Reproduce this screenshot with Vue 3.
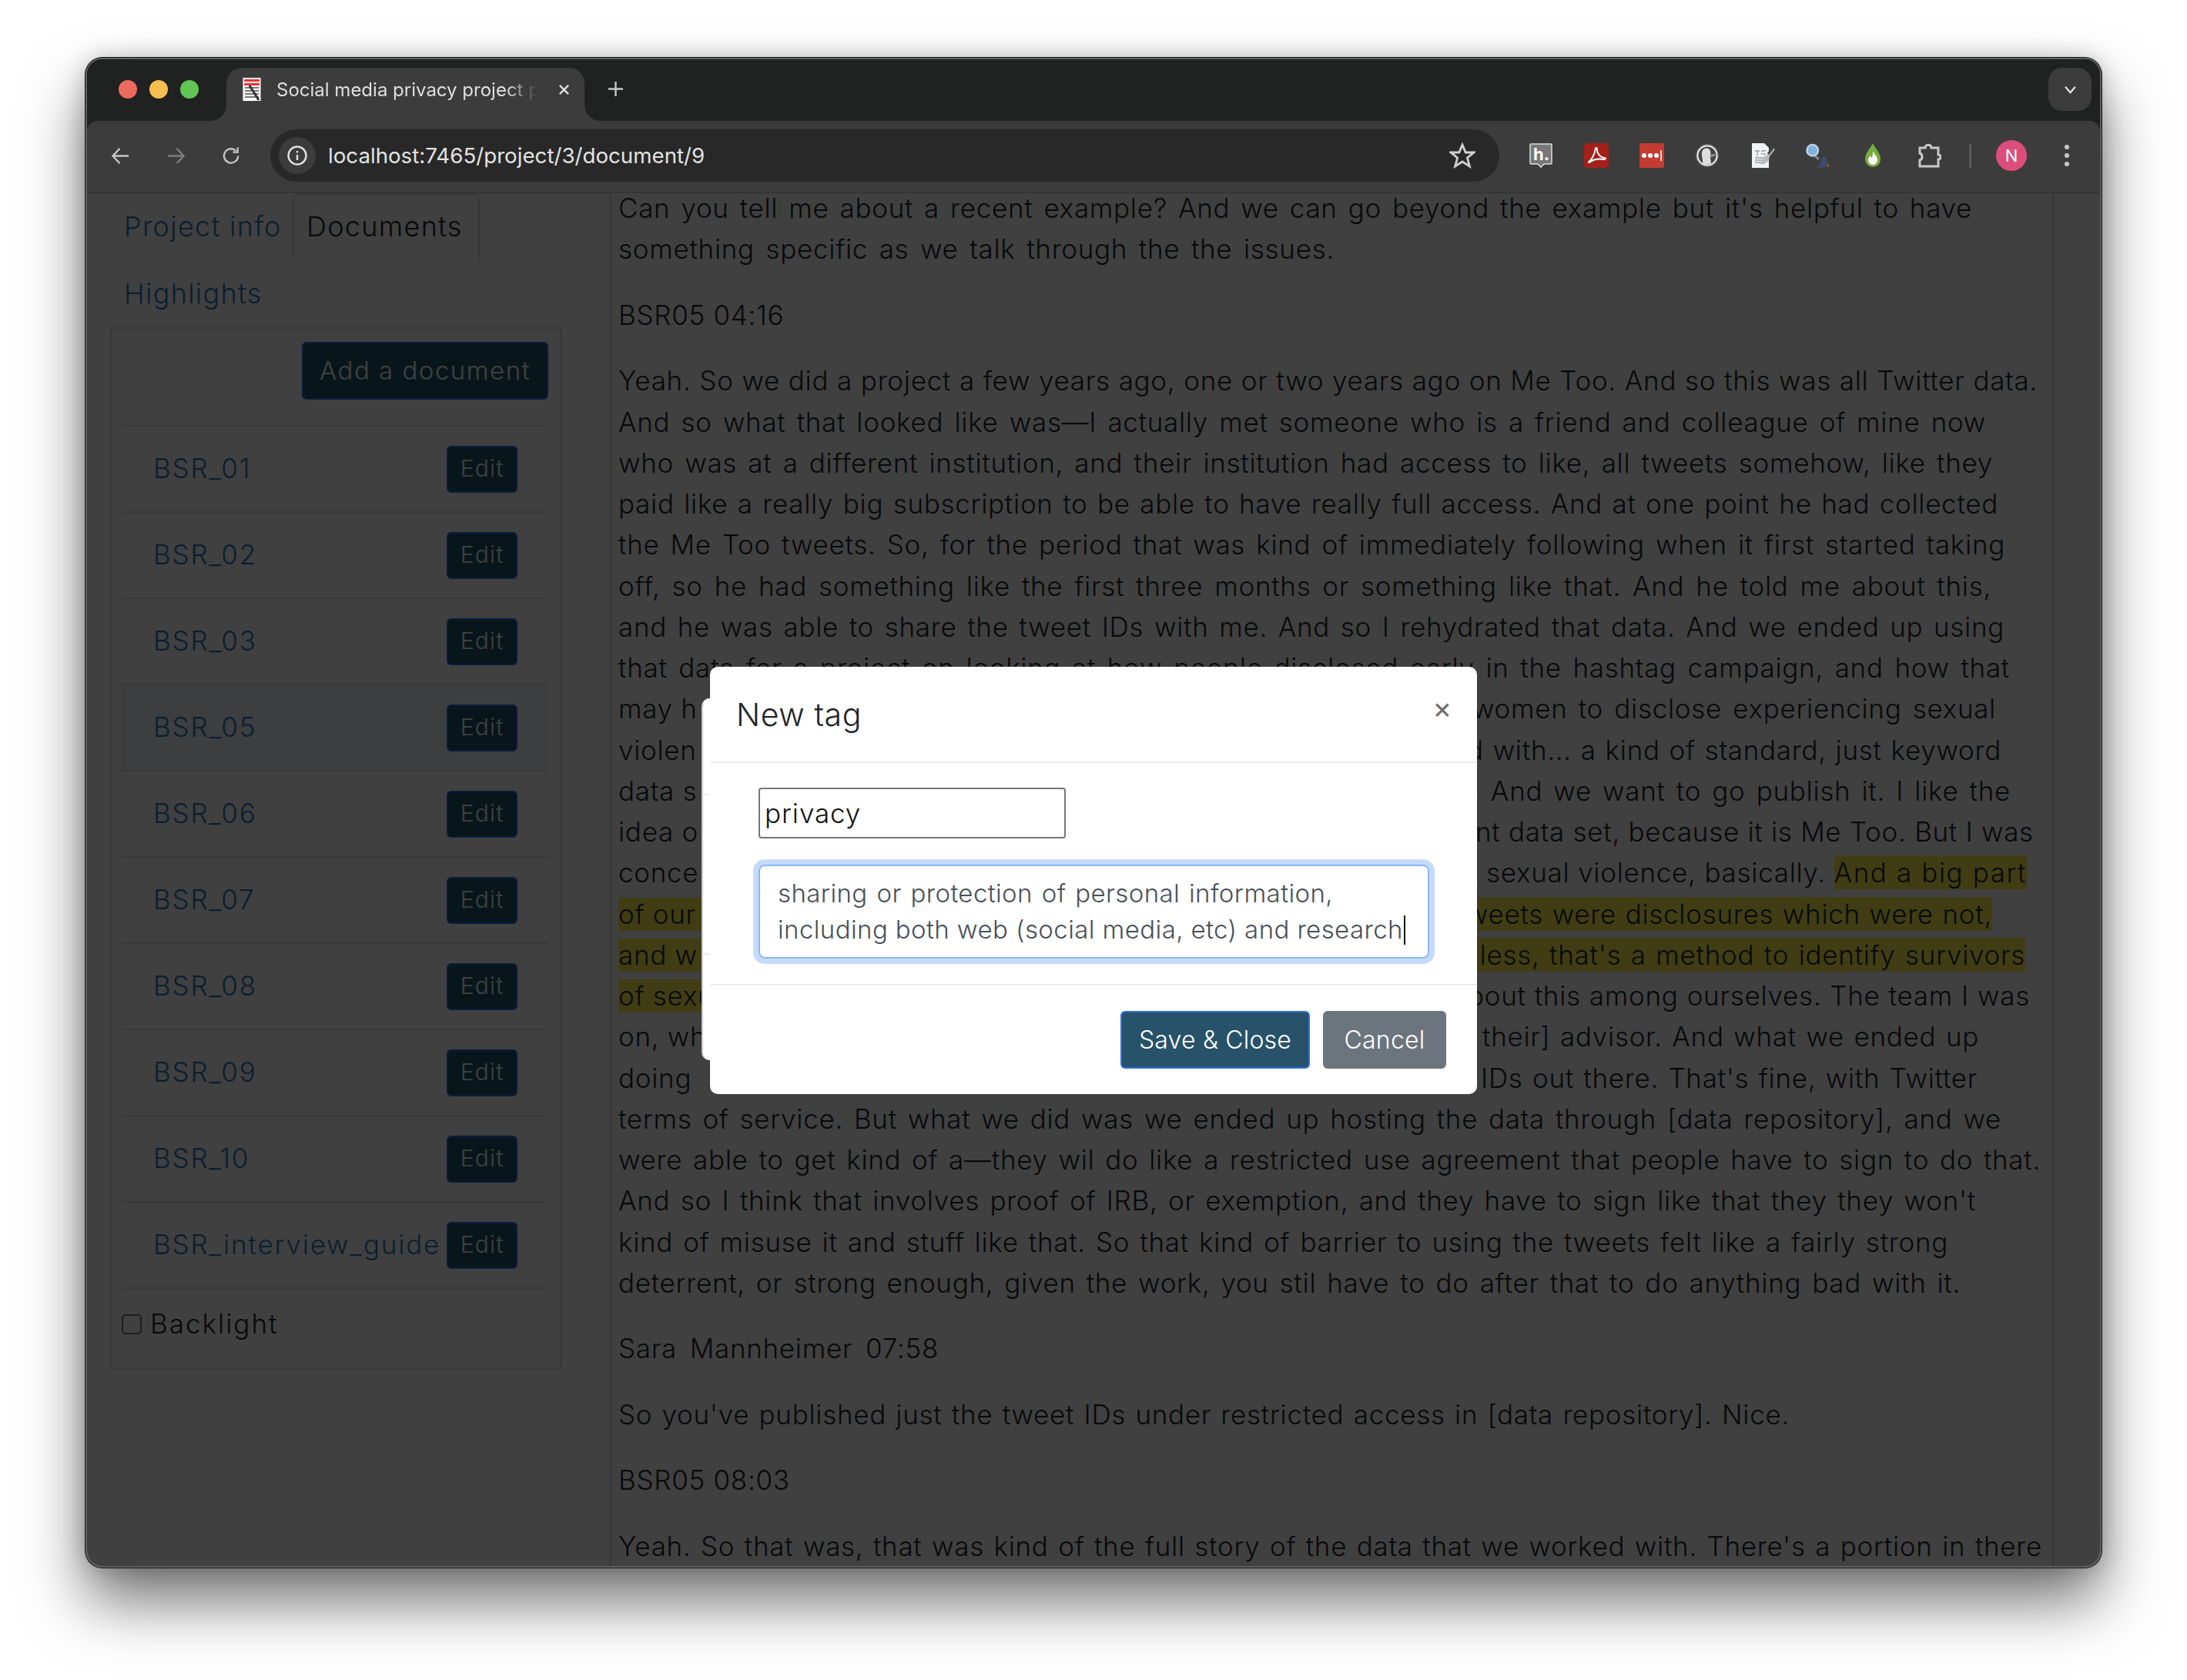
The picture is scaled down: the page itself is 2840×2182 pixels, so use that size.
<script setup>
const docs = ['BSR_01', 'BSR_02', 'BSR_03', 'BSR_05', 'BSR_06', 'BSR_07', 'BSR_08', 'BSR_09', 'BSR_10', 'BSR_interview_guide']

const TEXT_LEFT = 803

// end = where the line stops; lines that run behind the dialog only keep the parts you can see
const paragraphs = [
  [
    { text: "Can you tell me about a recent example? And we can go beyond the example but it's helpful to have", end: 2561 },
    { text: 'something specific as we talk through the the issues.', end: 1733 }
  ],
  [{ text: 'BSR05 04:16', end: 1016 }],
  [
    { text: 'Yeah. So we did a project a few years ago, one or two years ago on Me Too. And so this was all Twitter data.', end: 2646 },
    { text: 'And so what that looked like was—I actually met someone who is a friend and colleague of mine now', end: 2579 },
    { text: 'who was at a different institution, and their institution had access to like, all tweets somehow, like they', end: 2588 },
    { text: 'paid like a really big subscription to be able to have really full access. And at one point he had collected', end: 2595 },
    { text: 'the Me Too tweets. So, for the period that was kind of immediately following when it first started taking', end: 2604 },
    { text: 'off, so he had something like the first three months or something like that. And he told me about this,', end: 2586 },
    { text: 'and he was able to share the tweet IDs with me. And so I rehydrated that data. And we ended up using', end: 2603 },
    { text: 'that data for a project on looking at how people disclosed early in the hashtag campaign, and how that', end: 2610 },
    { left: 'may h', right: 'women to disclose experiencing sexual', start: 1912, end: 2592 },
    { left: 'violen', right: 'd with... a kind of standard, just keyword', start: 1905, end: 2599 },
    { left: 'data s', right: 't. And we want to go publish it. I like the', start: 1900, end: 2611 },
    { left: 'idea o', right: 'nt data set, because it is Me Too. But I was', start: 1916, end: 2635 },
    { left: 'conce', right: 't sexual violence, basically. ', mark: 'And a big part', start: 1908, end: 2632 },
    { left: 'of our', leftMark: true, mark: 'tweets were disclosures which were not,', start: 1892, end: 2587 },
    { left: 'and w', leftMark: true, mark: "unless, that's a method to identify survivors", start: 1879, end: 2630 },
    { left: 'of sexu', leftMark: true, right: 'about this among ourselves. The team I was', start: 1886, end: 2636 },
    { left: 'on, wh', right: 'their] advisor. And what we ended up', start: 1925, end: 2570 },
    { left: 'doing', right: "IDs out there. That's fine, with Twitter", start: 1923, end: 2568 },
    { text: 'terms of service. But what we did was we ended up hosting the data through [data repository], and we', end: 2599 },
    { text: 'were able to get kind of a—they wil do like a restricted use agreement that people have to sign to do that.', end: 2650 },
    { text: "And so I think that involves proof of IRB, or exemption, and they have to sign like that they they won't", end: 2566 },
    { text: 'kind of misuse it and stuff like that. So that kind of barrier to using the tweets felt like a fairly strong', end: 2530 },
    { text: 'deterrent, or strong enough, given the work, you stil have to do after that to do anything bad with it.', end: 2546 }
  ],
  [{ text: 'Sara Mannheimer 07:58', end: 1219 }],
  [{ text: "So you've published just the tweet IDs under restricted access in [data repository]. Nice.", end: 2324 }],
  [{ text: 'BSR05 08:03', end: 1023 }],
  [{ text: "Yeah. So that was, that was kind of the full story of the data that we worked with. There's a portion in there", end: 2652 }]
]
</script>

<template>
  <div class="page">
    <div class="window">
      <div class="tabstrip">
        <div class="lights">
          <span class="light red"></span>
          <span class="light yellow"></span>
          <span class="light green"></span>
        </div>
        <div class="tab">
          <svg class="favicon" viewBox="0 0 27 32">
            <rect x="1" y="0.5" width="24" height="31" fill="#fff" stroke="#444" stroke-width="1" />
            <rect x="3" y="3" width="20" height="3" fill="#e33" />
            <rect x="3" y="8" width="20" height="3" fill="#e33" />
            <path d="M4 14h18M4 18h18M4 22h18M4 26h18" stroke="#777" stroke-width="2" />
            <path d="M10 11l12 19" stroke="#333" stroke-width="3" />
          </svg>
          <span class="tab-title">Social media privacy project p</span>
          <svg class="tab-close" viewBox="0 0 16 16"><path d="M2 2l12 12M14 2L2 14" /></svg>
        </div>
        <svg class="new-tab" viewBox="0 0 22 22"><path d="M11 1v20M1 11h20" /></svg>
        <div class="strip-chevron">
          <svg viewBox="0 0 18 12"><path d="M2 2l7 8 7-8" /></svg>
        </div>
      </div>

      <div class="toolbar">
        <svg class="nav-icon" viewBox="0 0 26 26"><path d="M24 13H3M12 3L2.5 13 12 23" /></svg>
        <svg class="nav-icon off" viewBox="0 0 26 26"><path d="M2 13h21M14 3l9.500 10L14 23" /></svg>
        <svg class="nav-icon" viewBox="0 0 26 26"><path d="M22 13a9.500 9.500 0 1 1-3-7" /><path d="M21.500 1.500v6.500H15" /></svg>
        <div class="omnibox">
          <span class="info-chip">
            <svg viewBox="0 0 28 28"><circle cx="14" cy="14" r="11.500" /><path d="M14 13v7" /><path d="M14 8v2.500" /></svg>
          </span>
          <span class="url">localhost:7465/project/3/document/9</span>
          <svg class="star" viewBox="0 0 34 34"><path d="M17 3l4.200 10h10.800l-8.600 7 3 11L17 25l-9.400 6 3-11L2 13h10.800z" /></svg>
        </div>
        <div class="extensions">
          <svg class="ext" viewBox="0 0 30 32">
            <path d="M2 1h26a1 1 0 0 1 1 1v24a1 1 0 0 1-1 1H19l-4 4-4-4H2a1 1 0 0 1-1-1V2a1 1 0 0 1 1-1z" fill="#777" stroke="#ddd" stroke-width="1.500" />
            <text x="5" y="22" class="ext-h">h.</text>
          </svg>
          <svg class="ext" viewBox="0 0 32 32">
            <rect width="32" height="32" rx="4" fill="#a4201a" />
            <path d="M6 24c3-1 8-10 8.500-15 .3-4 2.500-4 2.500 0 0 5 5 10 9 10 3 0 2 2.500-1 2-5-.8-12 0-16 2.500-2 2-4 2-2.500.500z" fill="none" stroke="#fff" stroke-width="2" />
          </svg>
          <svg class="ext" viewBox="0 0 32 32">
            <rect width="32" height="32" rx="2" fill="#c33c32" />
            <circle cx="6" cy="16" r="3" fill="#fff" />
            <circle cx="14" cy="16" r="3" fill="#fff" />
            <circle cx="22" cy="16" r="3" fill="#fff" />
            <path d="M28 9v14" stroke="#fff" stroke-width="1.500" />
          </svg>
          <svg class="ext" viewBox="0 0 32 32">
            <circle cx="16" cy="16" r="15" fill="#666" />
            <circle cx="16" cy="16" r="12.500" fill="#444" stroke="#eee" stroke-width="2" />
            <path d="M10 27c1-6-3-13 0-18 3-4 9-3 10 1 1 3 0 4 0 5l6-1c1 2-1 3-6 4 0 3 1 6 1 8-3 2-8 2-11 1z" fill="#ddd" />
            <path d="M20 15l6-1c1 2-1 3-6 4z" fill="#888" />
          </svg>
          <svg class="ext" viewBox="0 0 30 32">
            <path d="M1 0h16l6 6v26H1z" fill="#eef4f3" />
            <path d="M5 10h6M8 10v7M13 10h6M13 14h6M5 19h14M5 22h14M5 25h14" stroke="#99a" stroke-width="1.300" />
            <path d="M29 6l-8 9-4 2-5 10c4 1 9-1 11-5l1-5 7-9z" fill="#bbb" />
            <path d="M29 5l-7 9" stroke="#444" stroke-width="3" />
          </svg>
          <svg class="ext" viewBox="0 0 33 32">
            <path d="M12 16l5 5" stroke="#889" stroke-width="3" />
            <circle cx="9" cy="9" r="7.500" fill="#7fb4dc" stroke="#bcd0de" stroke-width="2.500" />
            <path d="M13 32l5-4 3-8c2-3 6-2 7 1l1 6-4 5z" fill="#3d4d6c" />
            <path d="M29 26l3 5-4 0z" fill="#b5552a" />
          </svg>
          <svg class="ext drop" viewBox="0 0 22 32">
            <path d="M11 0c3 7 10 12 10 21a10 10 0 0 1-20 0C1 12 8 7 11 0z" fill="#78ac3e" />
            <path d="M12 11c1 4 5 6 5 11a6 6 0 0 1-12 0c0-3 2-5 3-6 0 2 1 3 2 3 1-2 0-5 2-8z" fill="#fff" />
          </svg>
          <svg class="ext puzzle" viewBox="0 0 30 32">
            <path d="M3 6h7c0-5 8-5 8 0h9v9c4 0 4 6 0 6v9H3v-8c4-1 4-8 0-9z" />
          </svg>
          <span class="ext-divider"></span>
          <svg class="avatar" viewBox="0 0 40 40">
            <circle cx="20" cy="20" r="20" fill="#db4e7c" />
            <text x="20" y="28" text-anchor="middle">N</text>
          </svg>
          <svg class="kebab" viewBox="0 0 8 30">
            <circle cx="4" cy="4" r="3" />
            <circle cx="4" cy="15" r="3" />
            <circle cx="4" cy="26" r="3" />
          </svg>
        </div>
      </div>

      <div class="content">
        <aside class="sidebar">
          <nav class="tabs">
            <a class="nav-tab first">Project info</a>
            <a class="nav-tab active">Documents</a>
            <a class="nav-tab">Highlights</a>
          </nav>
          <section class="doc-card">
            <div class="add-row">
              <button class="btn primary add-btn">Add a document</button>
            </div>
            <ul class="doc-list">
              <li v-for="doc in docs" :key="doc" class="doc-row" :class="{ current: doc === 'BSR_05' }">
                <a class="doc-name">{{ doc }}</a>
                <button class="btn primary edit-btn">Edit</button>
              </li>
            </ul>
            <label class="backlight">
              <span class="checkbox"></span>
              Backlight
            </label>
          </section>
        </aside>

        <main class="transcript">
          <div class="transcript-body">
            <p v-for="(para, i) in paragraphs" :key="i" class="para">
              <template v-for="(line, j) in para" :key="j">
                <span v-if="line.text" class="line" :style="{ width: line.end - TEXT_LEFT + 'px' }">{{ line.text }}</span>
                <span v-else class="line split" :style="{ width: line.end - TEXT_LEFT + 'px' }">
                  <span :class="{ 'left-mark': line.leftMark }">{{ line.left }}</span>
                  <span class="line-end" :style="{ width: line.end - line.start + 'px' }">{{ line.right }}<span v-if="line.mark" class="mark" :class="{ wide: line.right }">{{ line.mark }}</span></span>
                </span>
              </template>
            </p>
          </div>
        </main>

        <div class="backdrop"></div>

        <div class="dialog dialog-behind">
          <div class="behind-head"></div>
          <div class="behind-body"></div>
        </div>

        <div class="dialog">
          <header class="dialog-head">
            <h2>New tag</h2>
            <span class="dialog-close">×</span>
          </header>
          <div class="dialog-body">
            <input class="tag-name" value="privacy" />
            <div class="tag-desc">
              <div class="desc-first">sharing or protection of personal information,</div>
              <div>including both web (social media, etc) and research<span class="caret"></span></div>
            </div>
          </div>
          <footer class="dialog-foot">
            <button class="btn save">Save &amp; Close</button>
            <button class="btn cancel">Cancel</button>
          </footer>
        </div>
      </div>
    </div>
  </div>
</template>

<style>
html, body {
  margin: 0;
  background: #fff;
}
</style>

<style scoped>
.page {
  width: 2840px;
  height: 2182px;
  box-sizing: border-box;
  padding: 75px 0 0 111px;
  overflow: hidden;
  background: #fff;
  font-family: Inter, "Noto Sans", sans-serif;
}

.window {
  width: 2618px;
  height: 1961px;
  box-sizing: border-box;
  border: 2px solid #5e5e5e;
  border-radius: 22px;
  overflow: hidden;
  display: flex;
  flex-direction: column;
  background: #202221;
  box-shadow: 0 0 0 1px #1c1c1c, 0 44px 80px rgba(0, 0, 0, 0.55), 0 0 30px rgba(0, 0, 0, 0.22);
}

/* browser chrome */
.tabstrip {
  height: 80px;
  flex: none;
  display: flex;
  align-items: flex-start;
  background: #202221;
}

.lights {
  display: flex;
  gap: 16px;
  margin: 27px 0 0 41px;
}

.light {
  width: 24px;
  height: 24px;
  border-radius: 50%;
}
.red { background: #ee6a5f; }
.yellow { background: #f5be4f; }
.green { background: #61c554; }

.tab {
  position: relative;
  width: 465px;
  height: 69px;
  margin: 11px 0 0 36px;
  box-sizing: border-box;
  padding: 0 18px 13px 20px;
  display: flex;
  align-items: center;
  background: #3c3c3c;
  border-radius: 20px 20px 0 0;
}

.tab::before,
.tab::after {
  content: '';
  position: absolute;
  bottom: 0;
  width: 20px;
  height: 20px;
}
.tab::before {
  left: -20px;
  background: radial-gradient(circle at 0 0, #202221 19.500px, #3c3c3c 20px);
}
.tab::after {
  right: -20px;
  background: radial-gradient(circle at 100% 0, #202221 19.500px, #3c3c3c 20px);
}

.favicon {
  width: 27px;
  height: 32px;
  flex: none;
}

.tab-title {
  margin-left: 18px;
  width: 346px;
  flex: none;
  white-space: nowrap;
  font-size: 24px;
  color: #dedede;
  -webkit-mask-image: linear-gradient(to right, #000 86%, transparent 98%);
  mask-image: linear-gradient(to right, #000 86%, transparent 98%);
}

.tab-close {
  width: 15px;
  height: 15px;
  margin-left: 20px;
  flex: none;
  fill: none;
  stroke: #dedede;
  stroke-width: 2.500;
}

.new-tab {
  width: 21px;
  height: 21px;
  margin: 28px 0 0 30px;
  fill: none;
  stroke: #c8c8c8;
  stroke-width: 2.500;
}

.strip-chevron {
  width: 56px;
  height: 56px;
  margin: 11px 11px 0 auto;
  background: #3c3c3c;
  border-radius: 18px;
  display: flex;
  align-items: center;
  justify-content: center;
}
.strip-chevron svg {
  width: 17px;
  height: 11px;
  fill: none;
  stroke: #e0e0e0;
  stroke-width: 2.500;
}

.toolbar {
  height: 94px;
  flex: none;
  display: flex;
  align-items: center;
  padding: 0 0 2px 31px;
  background: #3c3c3c;
  border-radius: 14px 14px 0 0;
  border-bottom: 2px solid #353535;
  box-sizing: border-box;
}

.nav-icon {
  width: 25px;
  height: 25px;
  margin-right: 47px;
  flex: none;
  fill: none;
  stroke: #c6c6c6;
  stroke-width: 2.400;
}
.nav-icon.off { stroke: #7c7c7c; }

.omnibox {
  width: 1596px;
  height: 68px;
  margin-left: -9px;
  flex: none;
  box-sizing: border-box;
  display: flex;
  align-items: center;
  padding: 0 31px 0 11px;
  background: #282828;
  border-radius: 34px;
}

.info-chip {
  width: 48px;
  height: 48px;
  border-radius: 50%;
  background: #3c3c3c;
  display: flex;
  align-items: center;
  justify-content: center;
}
.info-chip svg {
  width: 28px;
  height: 28px;
  fill: none;
  stroke: #e0e0e0;
  stroke-width: 2.400;
}

.url {
  margin-left: 16px;
  font-size: 27.700px;
  color: #e3e3e3;
}

.star {
  width: 34px;
  height: 34px;
  margin-left: auto;
  fill: none;
  stroke: #d0d0d0;
  stroke-width: 2.800;
}

.extensions {
  flex: 1;
  display: flex;
  align-items: center;
  padding-left: 38px;
}

.ext {
  width: 32px;
  height: 32px;
  margin-right: 40px;
  flex: none;
}

.ext-h {
  font-family: Inter, sans-serif;
  font-weight: 700;
  font-size: 22px;
  fill: #fff;
}

.drop {
  margin-left: 4px;
  width: 22px;
  margin-right: 46px;
}

.puzzle {
  margin-right: 36px;
  fill: none;
  stroke: #c8c8c8;
  stroke-width: 3;
}

.ext-divider {
  width: 3px;
  height: 32px;
  background: #5c5c5c;
  border-radius: 2px;
  flex: none;
}

.avatar {
  width: 40px;
  height: 40px;
  margin-left: 32px;
  flex: none;
}
.avatar text {
  font-family: Inter, sans-serif;
  font-size: 22px;
  fill: #fff;
}

.kebab {
  width: 8px;
  height: 30px;
  margin-left: 48px;
  flex: none;
  fill: #c8c8c8;
}

/* page under the modal */
.content {
  position: relative;
  flex: 1;
  min-height: 0;
  display: flex;
  background: #fff;
  color: #212529;
  font-weight: 300;
  font-size: 35px;
  line-height: 53.250px;
  letter-spacing: 0.7px;
}

.sidebar {
  width: 678px;
  flex: none;
  box-sizing: border-box;
  padding-left: 30px;
}

.tabs {
  width: 586px;
  display: flex;
  flex-wrap: wrap;
  height: 174px;
}

.nav-tab {
  height: 87px;
  box-sizing: border-box;
  padding: 17px 18px;
  color: #2f78b8;
  white-space: nowrap;
  font-size: 36px;
  letter-spacing: 1.300px;
}

.nav-tab.first {
  width: 237px;
}

.nav-tab.active {
  width: 243px;
  color: #212529;
  border: 2px solid #e0e0e0;
  border-bottom: none;
  border-radius: 8px 8px 0 0;
  padding: 15px 16px;
}

.doc-card {
  width: 586px;
  height: 1353px;
  box-sizing: border-box;
  border: 2px solid #e4e4e4;
  padding: 17px 15px 0 13px;
  letter-spacing: 1.800px;
}

.add-row {
  height: 108px;
  display: flex;
  justify-content: flex-end;
  align-items: flex-start;
}

.btn {
  font: inherit;
  box-sizing: border-box;
  cursor: pointer;
  border-radius: 6px;
}

.primary {
  background: #235a6e;
  border: 2px solid #2f6fea;
  color: #fff;
}

.add-btn {
  width: 320px;
  height: 75px;
  padding: 0;
  font-size: 33px;
  letter-spacing: 1.500px;
  white-space: nowrap;
}

.doc-list {
  list-style: none;
  margin: 0;
  padding: 0;
}

.doc-row {
  height: 112px;
  box-sizing: border-box;
  border-top: 2px solid #e0e0e0;
  display: flex;
  align-items: center;
  padding-left: 41px;
}
.doc-row.current { background: #f4f6fc; }

.doc-name {
  width: 381px;
  flex: none;
  color: #2f78b8;
  white-space: nowrap;
}

.edit-btn {
  width: 92px;
  height: 61px;
  padding: 0;
  font-size: 30px;
  letter-spacing: 1.200px;
}

.backlight {
  border-top: 2px solid #e0e0e0;
  display: flex;
  align-items: center;
  height: 92px;
  gap: 11px;
  letter-spacing: 2px;
}

.checkbox {
  width: 26px;
  height: 26px;
  box-sizing: border-box;
  border: 2px solid #767676;
  border-radius: 5px;
  background: #fff;
}

.transcript {
  width: 1877px;
  flex: none;
  box-sizing: border-box;
  padding-left: 9px;
  border-left: 3px solid #e8e8e8;
  border-right: 3px solid #e8e8e8;
}

.transcript-body {
  margin-top: -7px;
}

.para {
  margin: 0 0 32.250px;
}

.line {
  display: block;
  white-space: nowrap;
  text-align-last: justify;
}

.split {
  display: flex;
  justify-content: space-between;
  text-align-last: auto;
}

.line-end {
  display: block;
  flex: none;
  white-space: nowrap;
  text-align-last: justify;
}

.mark {
  padding: 1px 0;
  background: #fff450;
}

.mark.wide {
  letter-spacing: 1.500px;
}

.left-mark {
  display: block;
  width: 130px;
  overflow: hidden;
  line-height: 43px;
  align-self: center;
  background: #fff450;
}

.backdrop {
  position: absolute;
  inset: 0;
  background: rgba(0, 0, 0, 0.75);
}

/* dialogs */
.dialog {
  position: absolute;
  left: 809px;
  top: 615px;
  width: 996px;
  box-sizing: border-box;
  background: #fff;
  border-radius: 10px;
  color: #212529;
  letter-spacing: 0.6px;
}

.dialog-behind {
  left: 798px;
  top: 656px;
  width: 900px;
  height: 470px;
  border-left: 2px solid #ccc;
}

.behind-head {
  height: 124px;
  border-bottom: 2px solid #e9ecef;
}

.behind-body {
  height: 205px;
  border-bottom: 2px solid #e9ecef;
}

.dialog-head {
  height: 125px;
  box-sizing: border-box;
  border-bottom: 2px solid #e9ecef;
  padding: 0 32px 0 34px;
  display: flex;
  align-items: flex-start;
  justify-content: space-between;
}

.dialog-head h2 {
  margin: 32px 0 0;
  font-size: 41px;
  line-height: 60px;
  font-weight: 300;
}

.dialog-close {
  font-size: 38px;
  line-height: 40px;
  margin-top: 33px;
  color: #6f6f6f;
  font-weight: 400;
}

.dialog-body {
  height: 289px;
  box-sizing: border-box;
  padding: 32px 62px 0 63px;
  border-bottom: 2px solid #e9ecef;
}

.tag-name {
  display: block;
  width: 399px;
  height: 66px;
  box-sizing: border-box;
  border: 2px solid #767676;
  border-radius: 4px;
  padding: 0 6px;
  font: inherit;
  font-size: 35px;
  letter-spacing: 0.9px;
  color: #111;
  outline: none;
}

.tag-desc {
  position: relative;
  margin-top: 34px;
  width: 871px;
  height: 122px;
  box-sizing: border-box;
  border: 2px solid #8ab8fa;
  border-radius: 8px;
  padding: 12px 23px;
  box-shadow: 0 0 0 7px #c6dafc;
  font-size: 33px;
  line-height: 47px;
  letter-spacing: 0.4px;
  color: #495057;
  white-space: nowrap;
}

.desc-first {
  width: 721px;
  text-align-last: justify;
}

.caret {
  display: inline-block;
  width: 2px;
  height: 38px;
  margin-left: 1px;
  vertical-align: -8px;
  background: #111;
}

.dialog-foot {
  display: flex;
  justify-content: flex-end;
  gap: 17px;
  padding: 33px 40px 33px;
}

.dialog-foot .btn {
  height: 75px;
  padding: 0;
  font-size: 32px;
  letter-spacing: 0.2px;
  color: #fff;
}

.save {
  width: 246px;
  background: #27526a;
  border: 2px solid #2f6fea;
}

.cancel {
  width: 160px;
  background: #6c757d;
  border: 2px solid #6c757d;
}
</style>
